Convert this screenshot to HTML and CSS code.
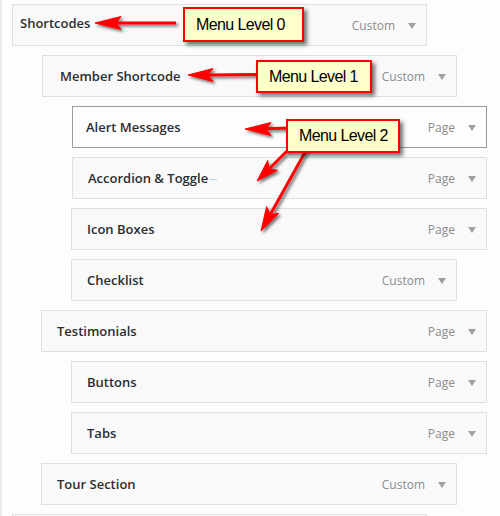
FILE: index.html
```html
<!DOCTYPE html>
<html>
<head>
<meta charset="utf-8">
<link rel="stylesheet" href="styles.css">
</head>
<body>
<div class="page">
  <ul class="menu">
    <li class="item w-l0 lift"><span class="title">Shortcodes</span><span class="type">Custom</span><span class="caret"></span></li>
    <li class="item w-l1 pad-18"><span class="title">Member Shortcode</span><span class="type">Custom</span><span class="caret"></span></li>
    <li class="item w-l2 active pad-14"><span class="title">Alert Messages</span><span class="type">Page</span><span class="caret"></span></li>
    <li class="item w-l2"><span class="title">Accordion &amp; Toggle<span class="mark"></span></span><span class="type">Page</span><span class="caret"></span></li>
    <li class="item w-l2b"><span class="title">Icon Boxes</span><span class="type">Page</span><span class="caret"></span></li>
    <li class="item w-l2c"><span class="title">Checklist</span><span class="type">Custom</span><span class="caret"></span></li>
    <li class="item w-l1b"><span class="title">Testimonials</span><span class="type">Page</span><span class="caret"></span></li>
    <li class="item w-l2b"><span class="title">Buttons</span><span class="type">Page</span><span class="caret"></span></li>
    <li class="item w-l2b"><span class="title">Tabs</span><span class="type">Page</span><span class="caret"></span></li>
    <li class="item w-l1c"><span class="title">Tour Section</span><span class="type">Custom</span><span class="caret"></span></li>
    <li class="item w-l0b stub"></li>
  </ul>

  <svg class="arrows" width="500" height="516" viewBox="0 0 500 516">
    <defs>
      <filter id="sh" x="-20%" y="-20%" width="140%" height="140%">
        <feDropShadow dx="2" dy="2" stdDeviation="1.5" flood-color="#000" flood-opacity="0.55"/>
      </filter>
    </defs>
    <g filter="url(#sh)" fill="#f00" stroke="#f00" stroke-linejoin="round">
      <line x1="176" y1="23" x2="114" y2="23" stroke-width="3"/>
      <polygon points="95,23 121,16.5 116,23 121,29.5" stroke-width="1"/>

      <line x1="258" y1="74.5" x2="207" y2="75" stroke-width="3"/>
      <polygon points="188,75 213,68.5 208,75 213,81.5" stroke-width="1"/>

      <line x1="290" y1="128" x2="264" y2="128.8" stroke-width="3"/>
      <polygon points="245,129 271,122.5 266,129 271,135.5" stroke-width="1"/>

      <line x1="292" y1="146" x2="268" y2="170" stroke-width="3"/>
      <polygon points="257,181 267.7,160.5 269,169 277.5,170.3" stroke-width="1"/>

      <line x1="308" y1="147" x2="270" y2="215" stroke-width="3"/>
      <polygon points="261,231 266.6,206.6 270.3,214.4 278.8,213.4" stroke-width="1"/>
    </g>
  </svg>

  <div class="callout c0">Menu Level 0</div>
  <div class="callout c1">Menu Level 1</div>
  <div class="callout c2">Menu Level 2</div>
</div>
</body>
</html>
```

FILE: styles.css
```css
html, body {
  margin: 0;
  padding: 0;
  background: #fdfdfd;
  overflow: hidden;
}

.page {
  position: relative;
  height: 516px;
  overflow: hidden;
  border-left: 2px solid #ececec;
  box-sizing: border-box;
  padding-top: 4px;
}

.menu {
  list-style: none;
  margin: 0;
  padding: 0;
  display: flex;
  flex-direction: column;
  gap: 9px;
  align-items: flex-start;
}

.item {
  box-sizing: border-box;
  height: 42px;
  flex-shrink: 0;
  display: flex;
  align-items: center;
  border: 1px solid #dfdfdf;
  background: #f9f9f9;
  padding: 0 10px 0 15px;
  font-family: "Open Sans", "Liberation Sans", sans-serif;
}

.stub {
  height: 2px;
  border-bottom: none;
}

.title {
  flex: 1;
  font-size: 13px;
  font-weight: 600;
  color: #2a2e33;
  white-space: nowrap;
}

.type {
  font-size: 12px;
  color: #8c8c8c;
}

.caret {
  width: 0;
  height: 0;
  margin-left: 13px;
  border-left: 4px solid transparent;
  border-right: 4px solid transparent;
  border-top: 6px solid #a0a0a0;
  margin-top: 2px;
}

.mark {
  display: inline-block;
  width: 7px;
  height: 1px;
  background: #a6dcf0;
  vertical-align: middle;
  margin-left: 2px;
}

/* geometry per row (outer page has 2px left border) */
.w-l0  { margin-left: 10px; width: 415px; padding-left: 7px; }
.w-l0b { margin-left: 10px; width: 415px; }
.w-l1  { margin-left: 40px; width: 415px; }
.w-l1b { margin-left: 39px; width: 446px; }
.w-l1c { margin-left: 39px; width: 416px; }
.w-l2  { margin-left: 70px; width: 415px; }
.w-l2b { margin-left: 69px; width: 416px; }
.w-l2c { margin-left: 69px; width: 386px; }

.pad-18 { padding-left: 17px; }
.pad-14 { padding-left: 13px; }

.lift .title { margin-top: -5px; }

.active {
  border-color: #9a9a9a;
  background: #fdfdfd;
}

/* overlays */
.arrows {
  position: absolute;
  left: -2px;
  top: 0;
  pointer-events: none;
}

.callout {
  position: absolute;
  box-sizing: border-box;
  border: 2px solid #ff0000;
  background: #ffffcc;
  box-shadow: 3px 3px 4px rgba(0, 0, 0, 0.55);
  font-family: "Liberation Sans", Arial, sans-serif;
  font-size: 16px;
  letter-spacing: -0.6px;
  color: #000;
  display: flex;
  align-items: center;
  padding-left: 11px;
  white-space: nowrap;
}

.c0 { left: 181px; top: 7px;   width: 121px; height: 35px; }
.c1 { left: 254px; top: 60px;  width: 116px; height: 33px; }
.c2 { left: 284px; top: 119px; width: 114px; height: 34px; }
```
